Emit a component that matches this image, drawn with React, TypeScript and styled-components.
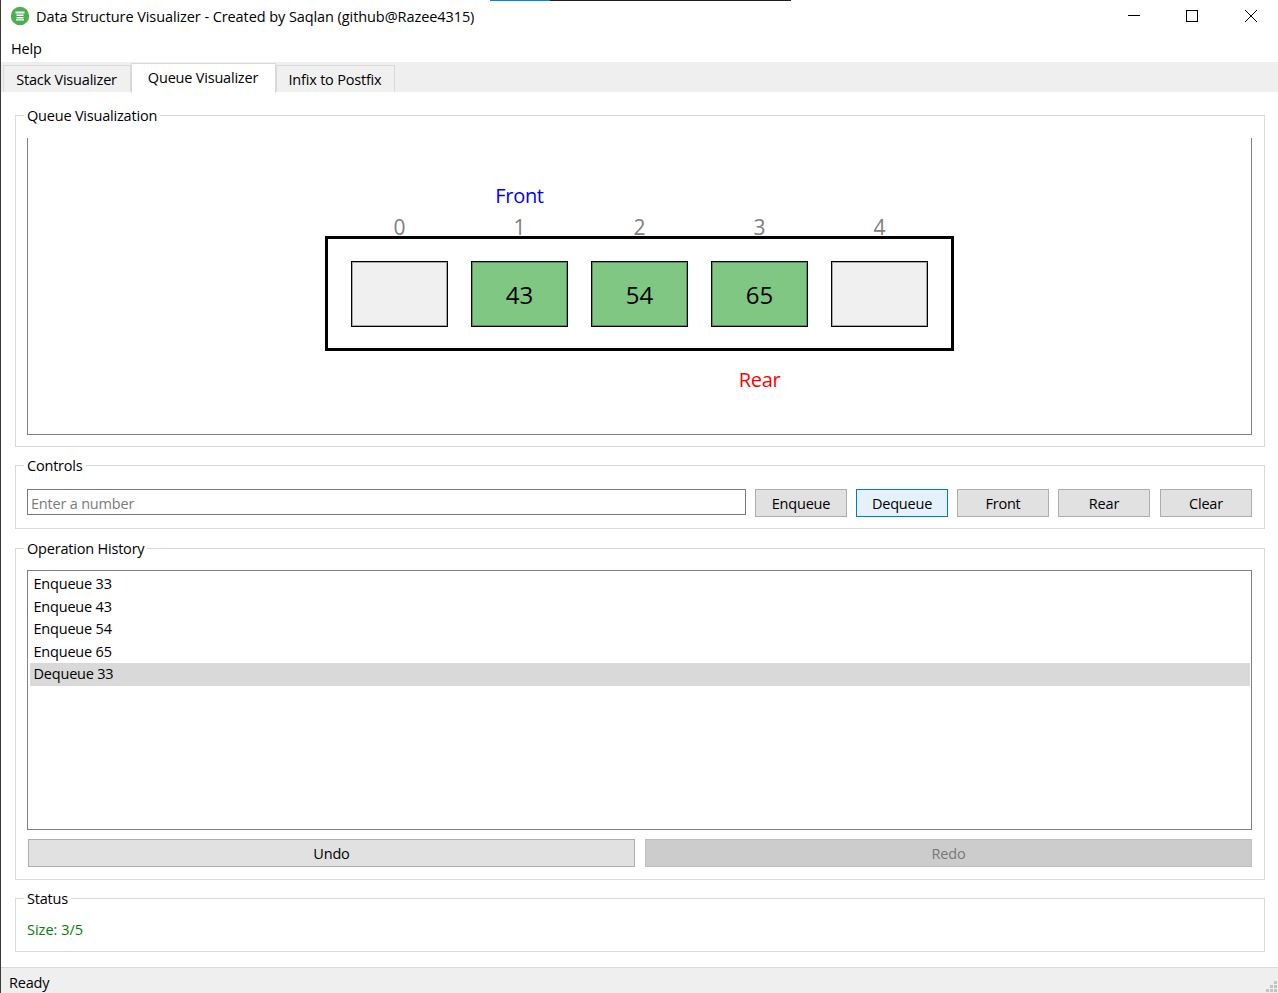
import React from "react";
import styled, { createGlobalStyle } from "styled-components";

const Global = createGlobalStyle`
  html, body { margin: 0; padding: 0; background: #fff; overflow: hidden; }
  * { box-sizing: border-box; }
  body { font-family: "Open Sans", "Noto Sans", "Liberation Sans", sans-serif; font-size: 14.5px; letter-spacing: -0.2px; color: #000; }
`;

const Window = styled.div`
  position: relative; width: 1278px; height: 993px; background: #fff;
  border-left: 1px solid #3a3a3a; display: flex; flex-direction: column;
`;
const BehindStrip = styled.div`
  position: absolute; top: 0; left: 489px; width: 301px; height: 1px;
  background: linear-gradient(to right, #0583e6 60px, #1f1f1f 60px);
`;
const TitleBar = styled.div`
  height: 33px; display: flex; align-items: center; padding: 0 0 2px 9px; flex: none;
`;
const TitleText = styled.span`
  margin-left: 6px; flex: 1; white-space: nowrap; position: relative; top: 1px; letter-spacing: -0.08px;
`;
const WinButton = styled.div`
  width: 58.5px; height: 31px; padding-left: 4px; display: flex; align-items: center; justify-content: center;
`;
const MenuBar = styled.div`
  height: 29px; display: flex; align-items: center; padding: 1px 0 0 10px; flex: none;
`;
const TabBar = styled.div`
  height: 30px; background: #efefef; display: flex; align-items: flex-end; padding-left: 2px; flex: none;
`;
const Tab = styled.div<{ $active?: boolean; $w: number }>`
  width: ${(p) => p.$w}px;
  height: ${(p) => (p.$active ? 30 : 27)}px;
  background: ${(p) => (p.$active ? "#fff" : "#f0f0f0")};
  border: 1px solid #d9d9d9;
  border-bottom: ${(p) => (p.$active ? "none" : "1px solid #f0f0f0")};
  margin-bottom: ${(p) => (p.$active ? -1 : 0)}px;
  display: flex; align-items: center; justify-content: center; position: relative;
  padding: ${(p) => (p.$active ? "0 1px 3px 0" : "2px 1px 0 0")};
`;
const Main = styled.div`
  flex: 1; display: flex; flex-direction: column; padding: 23px 13px 0 14px; min-height: 0;
`;
const Group = styled.section<{ $h: number; $gap?: number }>`
  position: relative; height: ${(p) => p.$h}px; margin-bottom: ${(p) => p.$gap ?? 18}px;
  border: 1px solid #d9d9d9; padding: 0 12px 0 11px; flex: none;
  display: flex; flex-direction: column;
`;
const Legend = styled.span`
  position: absolute; top: -10px; left: 8px; padding: 0 3px; background: #fff; line-height: 20px; white-space: nowrap;
`;
const Canvas = styled.div`
  margin-top: 22px; height: 297px; border: 1px solid #808080; border-top: none;
  display: flex; flex-direction: column; align-items: center;
`;
const PointerRow = styled.div<{ $top: number; $color: string }>`
  display: grid; grid-template-columns: repeat(5, 97px); column-gap: 23px;
  margin-top: ${(p) => p.$top}px; color: ${(p) => p.$color}; font-size: 20px; line-height: 28px; text-align: center; letter-spacing: -0.3px;
`;
const IndexRow = styled.div`
  display: grid; grid-template-columns: repeat(5, 97px); column-gap: 23px;
  margin-top: 4px; height: 22px; color: #808080; font-size: 21px; line-height: 27px; text-align: center;
`;
const QueueBox = styled.div`
  width: 629px; height: 115px; border: 3px solid #000; padding: 22px 0 0 23px;
  display: grid; grid-template-columns: repeat(5, 97px); column-gap: 23px; align-content: start;
`;
const Cell = styled.div<{ $filled?: boolean }>`
  height: 66px; border: 1px solid #000; box-shadow: inset 0 0 0 1px rgba(0, 0, 0, 0.3);
  background: ${(p) => (p.$filled ? "#81c784" : "#f0f0f0")};
  display: flex; align-items: center; justify-content: center; font-size: 24px; letter-spacing: 0;
`;
const ControlRow = styled.div`
  margin-top: 23px; display: flex; align-items: flex-start; gap: 9px;
  & > :last-child { margin-left: 1px; }
`;
const Input = styled.input`
  width: 719px; height: 26px; border: 1px solid #7a7a7a; padding: 2px 3px 0; font: inherit; letter-spacing: inherit; outline: none;
  &::placeholder { color: #7c7c7c; opacity: 1; }
`;
const Btn = styled.div<{ $kind?: "hover" | "off"; $w?: number }>`
  width: ${(p) => (p.$w ? `${p.$w}px` : "92px")}; height: 28px; display: flex; align-items: center; justify-content: center;
  background: ${(p) => (p.$kind === "hover" ? "#e5f1fb" : p.$kind === "off" ? "#cccccc" : "#e1e1e1")};
  border: 1px solid ${(p) => (p.$kind === "hover" ? "#0078d7" : p.$kind === "off" ? "#bfbfbf" : "#adadad")};
  color: ${(p) => (p.$kind === "off" ? "#787878" : "#000")};
`;
const List = styled.div`
  margin-top: 21px; height: 260px; border: 1px solid #808080; padding: 2px 1px 0 2px;
`;
const Row = styled.div<{ $sel?: boolean }>`
  height: 22.5px; line-height: 22px; padding-left: 3.5px; background: ${(p) => (p.$sel ? "#d9d9d9" : "transparent")};
`;
const UndoRow = styled.div`
  margin-top: 9px; padding-left: 1px; display: flex; gap: 10px;
`;
const StatusText = styled.div`
  margin-top: 20px; color: #008000; line-height: 22px; letter-spacing: 0;
`;
const StatusBar = styled.footer`
  position: absolute; left: 0; right: 0; bottom: 0; height: 26px; background: #efefef; border-top: 1px solid #d9d9d9;
  padding: 4px 0 0 8px; line-height: 22px;
`;
const Grip = styled.svg`
  position: absolute; right: 0; bottom: 0;
`;

const items = [null, 43, 54, 65, null];
const history = ["Enqueue 33", "Enqueue 43", "Enqueue 54", "Enqueue 65", "Dequeue 33"];

export default function App() {
  return (
    <Window>
      <Global />
      <BehindStrip />
      <TitleBar>
        <svg width="20" height="20" viewBox="0 0 20 20">
          <circle cx="10" cy="10" r="9.2" fill="#4caf50" />
          <path d="M5.5 5.5h9v2h-9zM6.5 8.6h7v1.4h-7zM6.5 11h7v1.4h-7zM6 13.2h8v1.4H6z" fill="#fff" />
        </svg>
        <TitleText>Data Structure Visualizer - Created by Saqlan (github@Razee4315)</TitleText>
        <WinButton>
          <svg width="12" height="12" viewBox="0 0 12 12"><path d="M0 5.5h12" stroke="#000" strokeWidth="1" /></svg>
        </WinButton>
        <WinButton>
          <svg width="12" height="12" viewBox="0 0 12 12"><rect x="0.5" y="0.5" width="11" height="11" fill="none" stroke="#000" /></svg>
        </WinButton>
        <WinButton>
          <svg width="12" height="12" viewBox="0 0 12 12"><path d="M0 0l12 12M12 0L0 12" stroke="#000" strokeWidth="1" /></svg>
        </WinButton>
      </TitleBar>
      <MenuBar>Help</MenuBar>
      <TabBar>
        <Tab $w={128}>Stack Visualizer</Tab>
        <Tab $w={145} $active>Queue Visualizer</Tab>
        <Tab $w={119}>Infix to Postfix</Tab>
      </TabBar>
      <Main>
        <Group $h={332}>
          <Legend>Queue Visualization</Legend>
          <Canvas>
            <PointerRow $top={44} $color="#0000ff">
              <span />
              <span>Front</span>
            </PointerRow>
            <IndexRow>
              {items.map((_, i) => (
                <span key={i}>{i}</span>
              ))}
            </IndexRow>
            <QueueBox>
              {items.map((v, i) => (
                <Cell key={i} $filled={v !== null}>{v}</Cell>
              ))}
            </QueueBox>
            <PointerRow $top={15} $color="#ff0000">
              <span />
              <span />
              <span />
              <span>Rear</span>
            </PointerRow>
          </Canvas>
        </Group>
        <Group $h={64} $gap={19}>
          <Legend>Controls</Legend>
          <ControlRow>
            <Input placeholder="Enter a number" />
            <Btn>Enqueue</Btn>
            <Btn $kind="hover">Dequeue</Btn>
            <Btn>Front</Btn>
            <Btn>Rear</Btn>
            <Btn>Clear</Btn>
          </ControlRow>
        </Group>
        <Group $h={332}>
          <Legend>Operation History</Legend>
          <List>
            {history.map((h, i) => (
              <Row key={i} $sel={i === 4}>{h}</Row>
            ))}
          </List>
          <UndoRow>
            <Btn $w={607}>Undo</Btn>
            <Btn $w={607} $kind="off">Redo</Btn>
          </UndoRow>
        </Group>
        <Group $h={54}>
          <Legend>Status</Legend>
          <StatusText>Size: 3/5</StatusText>
        </Group>
      </Main>
      <StatusBar>
        Ready
        <Grip width="12" height="12" viewBox="0 0 12 12" fill="#c4c4c4">
          <rect x="8" y="0" width="3" height="3" />
          <rect x="4" y="4" width="3" height="3" />
          <rect x="8" y="4" width="3" height="3" />
          <rect x="0" y="8" width="3" height="3" />
          <rect x="4" y="8" width="3" height="3" />
          <rect x="8" y="8" width="3" height="3" />
        </Grip>
      </StatusBar>
    </Window>
  );
}
